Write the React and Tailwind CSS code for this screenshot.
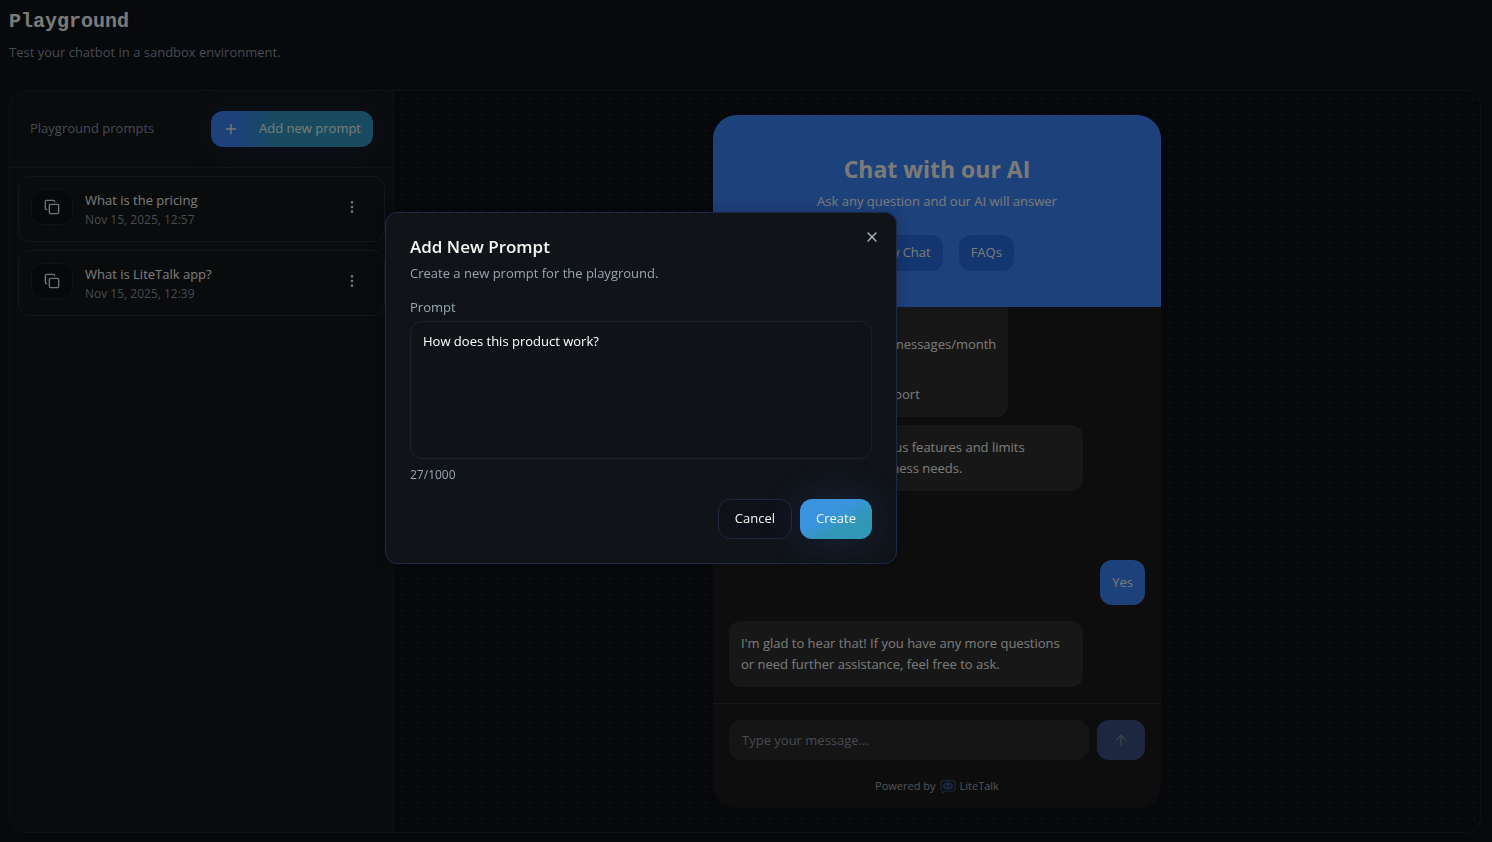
import { useState } from 'react'
import { ArrowUp, Copy, EllipsisVertical, Plus, X } from 'lucide-react'

const prompts = [
  { id: 1, title: 'What is the pricing', date: 'Nov 15, 2025, 12:57' },
  { id: 2, title: 'What is LiteTalk app?', date: 'Nov 15, 2025, 12:39' },
]

function PromptItem({ prompt }) {
  return (
    <li className="flex items-start gap-3 rounded-xl border border-[#232a3a] p-3">
      <button type="button" aria-label="Copy prompt" className="flex h-9 w-[42px] shrink-0 items-center justify-center rounded-xl border border-[#20242e] bg-[#0e1018] text-[#e6e8ea]">
        <Copy className="h-4 w-4" strokeWidth={2} />
      </button>
      <div className="min-w-0 flex-1">
        <p className="truncate text-[13px] leading-[22px] text-[#f4f6f2]">{prompt.title}</p>
        <p className="text-xs leading-[18px] text-[#8a96a3]">{prompt.date}</p>
      </div>
      <button type="button" aria-label="Prompt options" className="flex h-9 w-10 shrink-0 items-center justify-center text-[#e6e8ea]">
        <EllipsisVertical className="h-4 w-4" />
      </button>
    </li>
  )
}

function Sidebar() {
  return (
    <aside className="w-96 shrink-0 border-r border-[#20242c] bg-[#14161a]">
      <div className="flex items-center justify-between border-b border-[#20242c] p-5">
        <h2 className="text-[13px] text-[#8a96a3]">Playground prompts</h2>
        <button type="button" className="flex h-9 items-center gap-5 rounded-xl bg-linear-to-r from-[#3b82f6] from-15% to-[#3096c0] to-40% px-3 text-[13px] text-[#f4f6f2] shadow-[0_0_32px_rgba(59,130,246,0.15)]">
          <Plus className="h-4 w-4" />
          Add new prompt
        </button>
      </div>
      <ul className="flex flex-col gap-2 p-2">
        {prompts.map((p) => <PromptItem key={p.id} prompt={p} />)}
      </ul>
    </aside>
  )
}

function Bubble({ mine, children }) {
  return (
    <div className={mine
      ? 'mt-[69px] self-end rounded-xl bg-[#3b82f6] p-3 text-[13px] leading-[21px] text-[#f4f6f2]'
      : 'max-w-[85%] self-start rounded-xl bg-[#2e2e2e] p-3 text-[13px] leading-[21px] text-[#f4f6f2]'}>
      {children}
    </div>
  )
}

function BotLogo() {
  return (
    <svg viewBox="0 0 16 16" className="h-4 w-4" fill="none" stroke="#33507f" strokeWidth="1">
      <path d="M8 0v3M5.500 2.500h-3A1.500 1.500 0 0 0 1 4v7.500A1.500 1.500 0 0 0 2.500 13v2L5 13h8.500a1.500 1.500 0 0 0 1.500-1.500V4a1.500 1.500 0 0 0-1.500-1.500h-3" />
      <path d="M5 3h6" stroke="#2c6a86" />
      <rect x="3.500" y="5" width="9" height="6" rx="2.500" fill="#33507f" />
      <circle cx="6" cy="8" r="1" fill="#1c1c1c" stroke="none" />
      <circle cx="10" cy="8" r="1" fill="#1c1c1c" stroke="none" />
    </svg>
  )
}

function ChatWidget() {
  return (
    <div className="flex min-h-0 w-full max-w-md flex-col overflow-hidden rounded-3xl bg-[#1b1b1b]">
      <header className="flex flex-col items-center bg-[#3b82f6] py-9 text-[#f4f6f2]">
        <h2 className="text-[23px] leading-9 font-bold">Chat with our AI</h2>
        <p className="mt-1 text-[13px] leading-5">Ask any question and our AI will answer</p>
        <div className="mt-6 flex gap-4">
          <button type="button" className="h-9 rounded-xl bg-[#276de0] px-3 text-[13px]">New Chat</button>
          <button type="button" className="h-9 rounded-xl bg-[#276de0] px-3 text-[13px]">FAQs</button>
        </div>
      </header>

      <div className="flex min-h-0 flex-1 flex-col justify-end overflow-hidden px-4 pb-4">
        <Bubble>
          <p>Business plan includes:</p>
          <ul className="mt-2 space-y-1">
            <li>Unlimited teams, 40,000 messages/month</li>
            <li>Custom branding</li>
            <li>Analytics and priority support</li>
          </ul>
        </Bubble>
        <div className="mt-2 flex flex-col">
          <Bubble>Our plans also have various features and limits customized for your business needs.</Bubble>
        </div>
        <Bubble mine>Yes</Bubble>
        <div className="mt-4 flex flex-col">
          <Bubble>I'm glad to hear that! If you have any more questions or need further assistance, feel free to ask.</Bubble>
        </div>
      </div>

      <form className="border-t border-[#2c2c2c] p-4 pb-3" onSubmit={(e) => e.preventDefault()}>
        <div className="flex gap-2">
          <input type="text" aria-label="Message" placeholder="Type your message..." className="h-10 min-w-0 flex-1 rounded-xl border border-[#262c3c] bg-[#2a2a2a] px-3 text-[13px] text-white outline-none placeholder:text-[#8a96a3]" />
          <button type="submit" aria-label="Send" className="flex h-10 w-12 items-center justify-center rounded-xl bg-[#3b5180] text-[#8e9a9e]">
            <ArrowUp className="h-4 w-4" strokeWidth={1.5} />
          </button>
        </div>
        <p className="mt-4 flex items-center justify-center gap-1 text-[11px] leading-5 text-[#a0a6ac]">
          Powered by <BotLogo /> LiteTalk
        </p>
      </form>
    </div>
  )
}

function AddPromptDialog({ onClose }) {
  const [text, setText] = useState('How does this product work?')
  return (
    <div className="fixed inset-0 flex items-start justify-center bg-black/50 pt-[212px] pr-[210px]">
      <div role="dialog" aria-modal="true" aria-labelledby="dialog-title" className="relative w-full max-w-lg rounded-xl border border-[#1e2b47] bg-[#101419] p-6 shadow-[0_0_16px_rgba(0,0,0,0.2)]">
        <button type="button" aria-label="Close" onClick={onClose} className="absolute top-4 right-4 text-[#a9b8bf]">
          <X className="h-4 w-4" />
        </button>
        <h2 id="dialog-title" className="text-[17px] leading-5 font-semibold text-[#f4f7f2]">Add New Prompt</h2>
        <p className="mt-1 text-[13px] leading-6 text-[#97a6b0]">Create a new prompt for the playground.</p>
        <form onSubmit={(e) => e.preventDefault()}>
          <label htmlFor="prompt" className="mt-3 block text-[13px] leading-5 text-[#97a6b0]">Prompt</label>
          <textarea
            id="prompt"
            maxLength={1000}
            value={text}
            onChange={(e) => setText(e.target.value)}
            className="mt-1 block h-[138px] w-full resize-none rounded-xl border border-[#1b212d] bg-[#0f1318] px-3 py-2 text-[13px] leading-[22px] text-white outline-none"
          />
          <p className="mt-2 text-xs leading-4 text-[#97a6b0]">{text.length}/1000</p>
          <div className="mt-4 flex justify-end gap-2">
            <button type="button" onClick={onClose} className="h-10 rounded-xl border border-[#1e2840] bg-[#0f1118] px-4 text-[13px] text-[#f4f7f2]">Cancel</button>
            <button type="submit" className="h-10 rounded-xl bg-linear-to-br from-[#3b93de] from-40% to-[#3097b6] to-65% px-4 text-[13px] text-[#f4f7f2] shadow-[0_0_40px_rgba(59,100,220,0.2)]">Create</button>
          </div>
        </form>
      </div>
    </div>
  )
}

export default function App() {
  const [open, setOpen] = useState(true)
  return (
    <div className="flex h-screen flex-col bg-[#0f1219] pt-1.5 pr-[11px] pb-[9px] pl-[9px] font-['Open_Sans','Noto_Sans',sans-serif]">
      <h1 className="font-['Liberation_Mono',monospace] text-xl leading-8 font-bold text-[#f4f6f2]">Playground</h1>
      <p className="mt-1 text-[13px] leading-5 text-[#8a96a3]">Test your chatbot in a sandbox environment.</p>
      <main className="mt-7 flex min-h-0 flex-1 overflow-hidden rounded-2xl border border-[#20242c]">
        <Sidebar />
        <section className="flex min-w-0 flex-1 justify-center bg-[#0e1118] bg-[radial-gradient(circle,#22262e_1px,transparent_1px)] bg-[size:16px_16px] p-6">
          <ChatWidget />
        </section>
      </main>
      {open && <AddPromptDialog onClose={() => setOpen(false)} />}
    </div>
  )
}
